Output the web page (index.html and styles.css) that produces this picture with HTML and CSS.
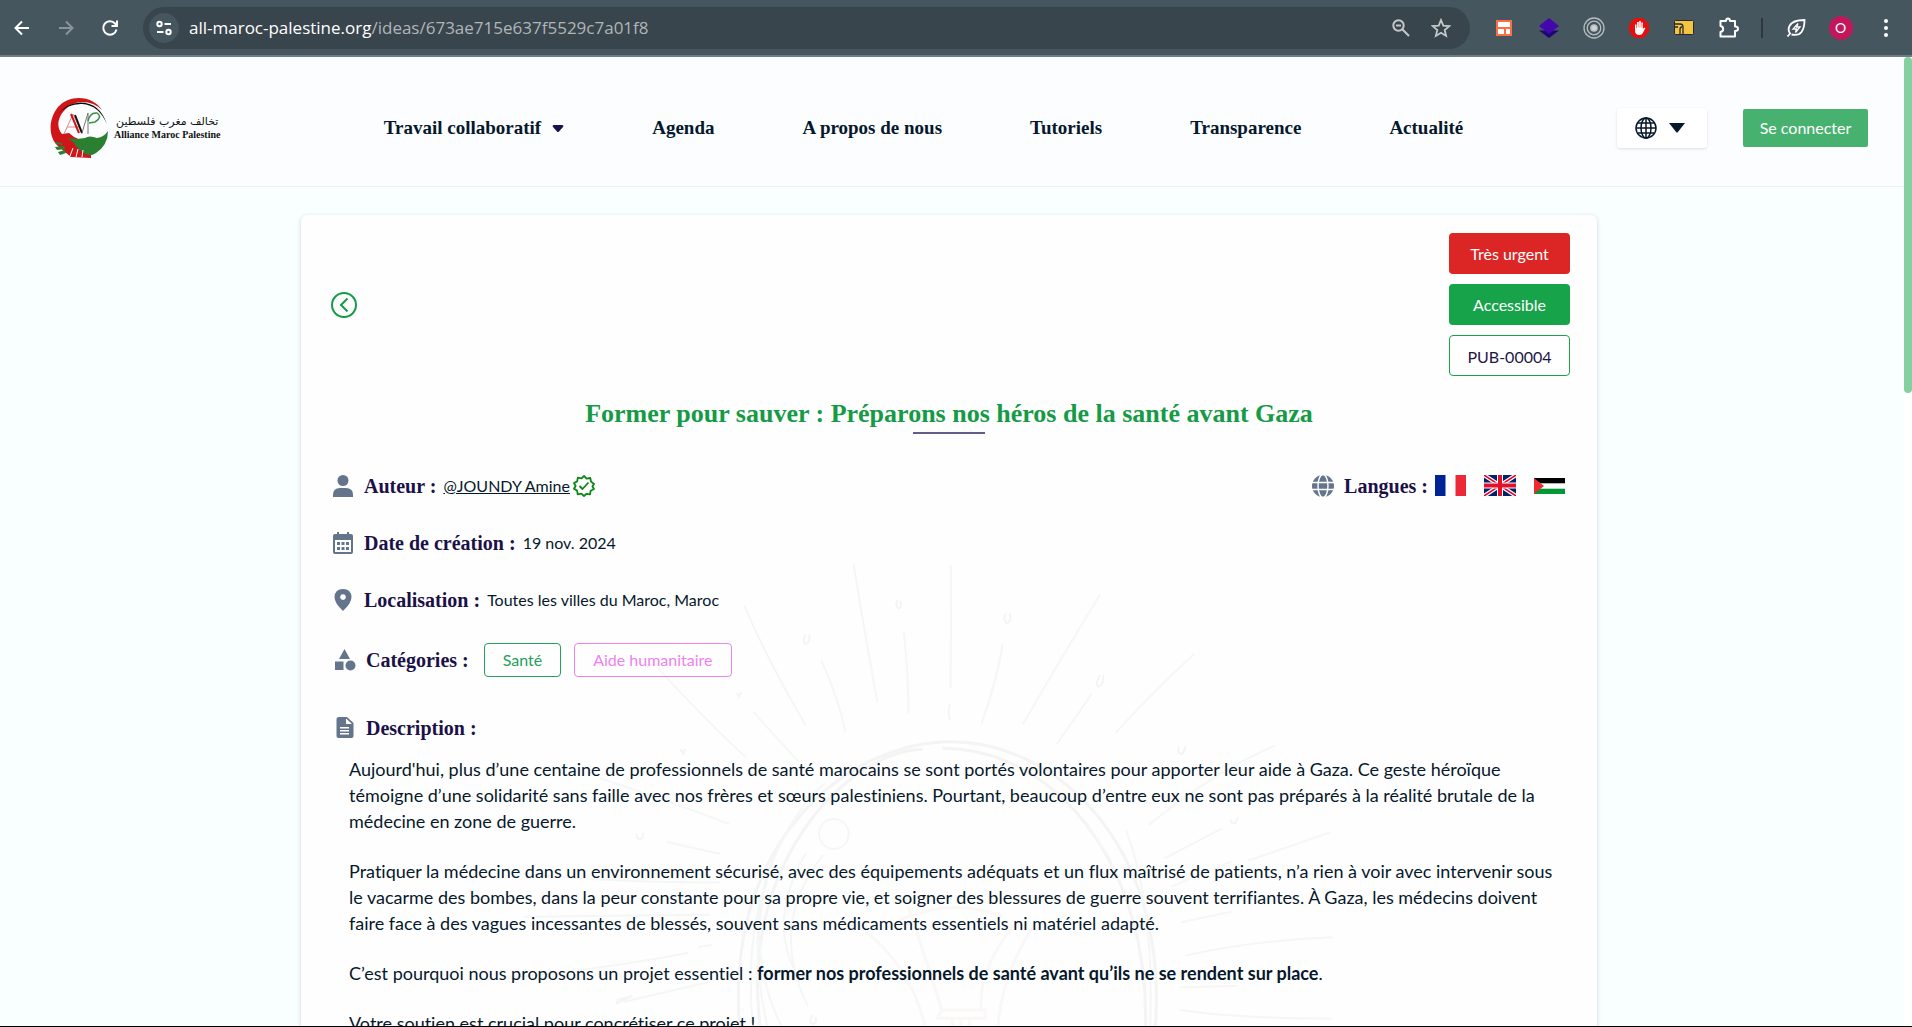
FILE: index.html
```html
<!DOCTYPE html>
<html lang="fr">
<head>
<meta charset="utf-8">
<title>Alliance Maroc Palestine</title>
<link rel="stylesheet" href="styles.css">
</head>
<body>
<div class="toolbar">
  <button class="tool nav-tool" aria-label="Retour"><svg width="20" height="20" viewBox="0 0 20 20" fill="none" stroke="#fff" stroke-width="2"><path d="M17 10H4M10 3.500L3.500 10l6.500 6.500"/></svg></button>
  <button class="tool nav-tool" aria-label="Avancer"><svg width="20" height="20" viewBox="0 0 20 20" fill="none" stroke="#8b969c" stroke-width="2"><path d="M3 10h13M10 3.500l6.500 6.500-6.500 6.500"/></svg></button>
  <button class="tool nav-tool" aria-label="Actualiser"><svg width="20" height="20" viewBox="0 0 20 20" fill="none" stroke="#fff" stroke-width="2"><path d="M16.500 11.500A6.700 6.700 0 1 1 15 5.500l1.500 1.700M17 2.500v5.500h-5.500"/></svg></button>
  <div class="address">
    <span class="site"><svg width="18" height="18" viewBox="0 0 18 18" fill="none" stroke="#fff" stroke-width="2"><circle cx="4.500" cy="5" r="2.200"/><path d="M9.500 5H16M2 13h6.500"/><circle cx="13.500" cy="13" r="2.200"/></svg></span>
    <span class="url">all-maroc-palestine.org<span class="path">/ideas/673ae715e637f5529c7a01f8</span></span>
    <button class="in-tool" aria-label="Zoom"><svg width="20" height="20" viewBox="0 0 20 20" fill="none" stroke="#c3c8ca" stroke-width="2"><circle cx="7.500" cy="7.500" r="5.200"/><path d="M5 7.500h5M11.500 11.500l6.500 6.500"/></svg></button>
    <button class="in-tool" aria-label="Favori"><svg width="20" height="20" viewBox="0 0 20 20" fill="none" stroke="#c3c8ca" stroke-width="1.800"><path d="M10 2l2.300 5.600 6 .5-4.600 3.900 1.400 5.900-5.100-3.200-5.100 3.200 1.400-5.900L1.700 8.100l6-.5z"/></svg></button>
  </div>
  <button class="tool" aria-label="Extension 1"><svg width="16" height="16" viewBox="0 0 16 16"><path fill="#fa7042" d="M0 0h16v16H0z"/><path fill="#fff" d="M2 2h12v5H2zM2 9h6v5H2zM10 9h4v5h-4z"/></svg></button>
  <button class="tool" aria-label="Extension 2"><svg width="22" height="22" viewBox="0 0 22 22"><path fill="#1f0675" d="M1 13.500h20L11 21z"/><path fill="#4407ad" d="M11 1l10 8-10 8-10-8z"/></svg></button>
  <button class="tool" aria-label="Extension 3"><svg width="22" height="22" viewBox="0 0 22 22" fill="none" stroke="#b7bcc0" stroke-width="1.300"><circle cx="11" cy="11" r="10"/><circle cx="11" cy="11" r="6.800"/><circle cx="11" cy="11" r="3.200" fill="#d0d2d4"/></svg></button>
  <button class="tool" aria-label="Extension 4"><svg width="20" height="20" viewBox="0 0 20 20"><path fill="#e50f0f" d="M6 0h8l6 6v8l-6 6H6l-6-6V6z"/><path fill="#fff" d="M6 6.500h1.500V10h.6V4h1.600v5.500h.5V3h1.600v6.500h.5V4.500h1.500V11l1.400-1.500 1.100.8-2.600 5Q13 17 10.500 17 6 17 6 12.500z"/></svg></button>
  <button class="tool" aria-label="Extension 5"><svg width="20" height="15" viewBox="0 0 20 15"><rect x=".5" y=".5" width="19" height="14" rx="1" fill="#f5c242" stroke="#222b30"/><path d="M1 4h5q3 0 3 3v7M6 14V9.500Q6 7 8 7M1 7h3" fill="none" stroke="#222b30" stroke-width="1.300"/></svg></button>
  <button class="tool" aria-label="Extensions"><svg width="22" height="22" viewBox="0 0 22 22" fill="none" stroke="#fff" stroke-width="2" stroke-linejoin="round"><path d="M2.500 4h5.500q0-2.500 2-2.500T12 4h5v5.500q3 0 3 2.200T17 14v5.500H2.500V15q2.700-.5 2.700-3T2.500 9z"/></svg></button>
  <span class="divider"></span>
  <button class="tool" aria-label="Performances"><svg width="20" height="20" viewBox="0 0 20 20" fill="none" stroke="#fff" stroke-width="1.800"><path d="M1.500 18.500l2.600-3Q1.500 12 3.500 8 6.500 2 18.500 2 18.500 10 15.500 14T5.500 16.500"/><path stroke-width="1.300" d="M12 5.500L7 11h3.500l-1 3.500 4.500-5.500h-3.300z"/></svg></button>
  <button class="tool" aria-label="Profil"><span class="avatar">O</span></button>
  <button class="tool" aria-label="Menu"><svg width="6" height="20" viewBox="0 0 6 20" fill="#fff"><circle cx="3" cy="3" r="2"/><circle cx="3" cy="10" r="2"/><circle cx="3" cy="17" r="2"/></svg></button>
</div>

<div class="viewport">
  <div class="page">
    <header class="header">
      <a class="logo" href="#">
        <svg width="60" height="62" viewBox="0 0 60 62" fill="none">
          <path fill="#cf1518" d="M52 13C44-1 20-4 8 10-3 24-1 42 9 50l12 10 20 1 0-5-8-12-9-4-5-4-7 1C6 30 7 19 18 10 28 2 43 4 52 13z"/>
          <path d="M8 17Q17 6 30 5.500q20 0 27 22Q49 8 32 7 18 6.500 8 17z" fill="#0a0a0a"/>
          <path fill="#2a7f31" d="M58 34q0 14-12 22-6 4-10 1-8-4-13-12l-5-4 9 1 8-1q4-3 12 0 7-1 11-7zM5 45l7 1 1 2-7-1zM5 50l9-1 1 3-8 1zM8 55l7-2 1 3-6 2z"/>
          <path d="M20 59l3-8M26 60l2-8M32 60l1-7" stroke="#fff"/>
          <path d="M14 37l9-20 9 20M17 30h12" stroke="#d98b8b"/>
          <path d="M21 17l8 19" stroke="#cf1518" stroke-width="2"/><path d="M25 18l7 18" stroke="#111" stroke-width="2"/>
          <path d="M32 36l6-20v21" stroke="#777"/><path d="M38 24q2-9 9-8 6 4-2 9l-6 1" stroke="#3b9142" stroke-width="1.500"/>
        </svg>
        <span class="brand"><span class="brand-ar" lang="ar" dir="rtl">تخالف مغرب فلسطين</span><span class="brand-fr">Alliance Maroc Palestine</span></span>
      </a>
      <nav class="nav">
        <a href="#">Travail collaboratif <svg width="12" height="9" viewBox="0 0 12 9"><path fill="#1e0f4f" d="M2 1h8q2 0 1 2L7 7.500q-1 1-2 0L1 3q-1-2 1-2z"/></svg></a>
        <a href="#">Agenda</a>
        <a href="#">A propos de nous</a>
        <a href="#">Tutoriels</a>
        <a href="#">Transparence</a>
        <a href="#">Actualité</a>
      </nav>
      <div class="actions">
        <button class="lang" aria-label="Langue">
          <svg width="22" height="22" viewBox="0 0 22 22" fill="none" stroke="#06182b" stroke-width="1.500"><circle cx="11" cy="11" r="10"/><ellipse cx="11" cy="11" rx="5" ry="10"/><path d="M11 1v20M1 11h20M3 6h16M3 16h16"/></svg>
          <svg width="16" height="10" viewBox="0 0 16 10"><path fill="#06182b" d="M0 0h16L8.500 9.500h-1z"/></svg>
        </button>
        <button class="login">Se connecter</button>
      </div>
    </header>

    <main class="main">
      <article class="card">
        <svg class="bulb" viewBox="0 0 1568 1461" preserveAspectRatio="none" fill="none">
          <g class="rays"><path d="M530 72Q555 290 580 488M635 275Q645 400 645 520M734 75L733 445M732 490q-6 25 0 50M302 198Q350 360 430 556M463 362Q500 480 513 577M1046 163Q970 340 884 553M842 312Q830 420 798 550M1242 342Q1160 450 1078 578M1028 462L955 612M120 382Q220 540 305 652M320 515L415 665M1411 617Q1290 690 1147 855M1301 865L1180 955M1527 877L1355 962M1320 965l-125 75M1320 1115l-105 32M1532 1192Q1370 1200 1223 1247M1213 1342l118-4M1212 1410Q1330 1435 1530 1436M0 715Q120 770 270 852M140 906l112 36M-180 1000Q40 1030 250 1027M-160 1130l390-6M-240 1320Q0 1290 185 1238M50 1385l180-60M205 1222l30-8"/></g>
          <g class="curls"><path d="M622 180q-6 20 3 25 7-6 3-22M848 220q-6 25 3 30 10-6 6-30M430 284q-8 22 0 28 10-6 8-30M1046 405q-12 25-4 35 12-8 10-35M286 458l5 12 4-14M168 628l6 12 4-14M1210 622q-4 18 5 20 8-6 8-24M76 880q0 18 8 18 8-4 6-20M1318 838q2 14 10 12l6-18M35 1390l32-22-30 12zM445 1425q-10 20 0 28 10-8 5-22"/></g>
          <g class="glass"><path d="M292 1461C260 900 520 605 734 605s455 300 427 856"/><path d="M335 1461C290 950 530 630 675 628M715 625C960 625 1150 990 1140 1461"/></g>
          <g class="rays"><path d="M320 1461C290 1040 410 800 470 730M1100 870Q1160 1100 1150 1461M405 845Q290 1070 350 1461M375 910Q290 1200 380 1461M467 945Q350 1150 435 1400M1015 845L1068 960M430 940Q350 1140 410 1300"/><ellipse cx="489" cy="882" rx="31" ry="45"/></g>
          <g class="filament"><path d="M555 1175Q650 1280 680 1461M645 1100L715 1410M875 1140Q790 1280 797 1410M910 1150Q840 1300 832 1461M625 1140Q740 1070 840 1130"/><path d="M715 1410h90v25h-100zM737 1435v26M755 1435v26M773 1435v26"/></g>
        </svg>
        <div class="card-head">
          <button class="back" aria-label="Retour"><svg width="26" height="26" viewBox="0 0 26 26" fill="none" stroke="#159a45" stroke-width="2"><circle cx="13" cy="13" r="12"/><path d="M16.500 6.500L10 13l6.500 6.500"/></svg></button>
          <div class="badges">
            <span class="badge red">Très urgent</span>
            <span class="badge green">Accessible</span>
            <span class="badge outline">PUB-00004</span>
          </div>
        </div>
        <h1 class="title">Former pour sauver : Préparons nos héros de la santé avant Gaza</h1>
        <div class="rows">
          <div class="row spread">
            <div class="field">
              <svg class="icon" viewBox="0 0 22 22" fill="#64748b"><circle cx="11" cy="5.500" r="5.500"/><path d="M1 22v-2q0-7 7-7h6q7 0 7 7v2z"/></svg>
              <h2 class="label">Auteur :</h2>
              <a class="author" href="#">@JOUNDY Amine</a>
              <svg class="verified" width="22" height="22" viewBox="0 0 22 22" fill="none" stroke="#0c8717" stroke-width="1.800" stroke-linejoin="round"><path d="M11 1l2.600 2.600 3.700-.6.700 3.600L21 9l-1.600 2.500L21 14l-3.300 1.700-.7 3.700-3.700-.5L11 21l-2.600-2.300-3.700.6-.6-3.700L1 13.800 2.600 11 1 8l3.200-1.600.6-3.700 3.700.6z"/><path d="M6.500 11l3 3 6-6.500"/></svg>
            </div>
            <div class="field">
              <svg class="icon" viewBox="0 0 22 22"><circle cx="11" cy="11" r="11" fill="#64748b"/><g fill="none" stroke="#fff" stroke-width="1.400"><ellipse cx="11" cy="11" rx="5" ry="11.500"/><path d="M0 7.500h22M0 14.500h22"/></g></svg>
              <h2 class="label">Langues :</h2>
              <div class="flags">
                <svg width="31" height="21" viewBox="0 0 31 21" role="img" aria-label="Français"><path fill="#fff" d="M0 0h31v21H0z"/><path fill="#002395" d="M0 0h10.500v21H0z"/><path fill="#ed2939" d="M20.500 0H31v21H20.500z"/></svg>
                <svg width="32" height="21" viewBox="0 0 32 21" role="img" aria-label="English"><path fill="#012169" d="M0 0h32v21H0z"/><path stroke="#fff" stroke-width="4" d="M0 0l32 21M32 0L0 21"/><path stroke="#e4002b" stroke-width="1.500" d="M0 0l32 21M32 0L0 21"/><path stroke="#fff" stroke-width="6" d="M16 0v21M0 10.500h32"/><path stroke="#e4102b" stroke-width="4" d="M16 0v21M0 10.500h32"/></svg>
                <svg width="31" height="16" viewBox="0 0 31 16" role="img" aria-label="العربية"><path fill="#fff" d="M0 0h31v16H0z"/><path d="M0 0h31v5.300H0z"/><path fill="#009736" d="M0 10.700h31V16H0z"/><path fill="#ee2a35" d="M0 0l10 8-10 8z"/></svg>
              </div>
            </div>
          </div>
          <div class="row field">
            <svg class="icon" viewBox="0 0 22 22"><path fill="#64748b" fill-rule="evenodd" d="M5 0h2v2h8V0h2v2h2q2 0 2 2v16q0 2-2 2H3q-2 0-2-2V4q0-2 2-2h2zM3 8v12h16V8z"/><path fill="#64748b" d="M5 10h3v3H5zM9.500 10h3v3h-3zM14 10h3v3h-3zM5 15h3v3H5zM9.500 15h3v3h-3zM14 15h3v3h-3z"/></svg>
            <h2 class="label">Date de création :</h2>
            <span class="value">19 nov. 2024</span>
          </div>
          <div class="row field">
            <svg class="icon" viewBox="0 0 22 22"><path fill="#64748b" fill-rule="evenodd" d="M11 0q8 0 8.500 8 0 6-8.500 14Q2.500 14 2.500 8 3 0 11 0zM11 5.200a2.900 2.900 0 1 0 .01 0z"/></svg>
            <h2 class="label">Localisation :</h2>
            <span class="value">Toutes les villes du Maroc, Maroc</span>
          </div>
          <div class="row field inset categories">
            <svg class="icon" viewBox="0 0 22 22" fill="#64748b"><path d="M10.500 0l5.500 10H5zM1 12.500h8.500V21H1z"/><circle cx="16.500" cy="16.500" r="5"/></svg>
            <h2 class="label">Catégories :</h2>
            <span class="chip sante">Santé</span>
            <span class="chip aide">Aide humanitaire</span>
          </div>
          <div class="field inset section">
            <svg class="icon" viewBox="0 0 22 22"><path fill="#64748b" d="M5 0h8l6.500 6v13q0 2-2 2H4.500q-2 0-2-2V2q0-2 2.500-2z"/><path fill="#fff" d="M12 1.500V7h6zM6 10h9v1.500H6zM6 13h9v1.500H6zM6 16h9v1.500H6z"/></svg>
            <h2 class="label">Description :</h2>
          </div>
        </div>
        <div class="description">
          <p>Aujourd'hui, plus d’une centaine de professionnels de santé marocains se sont portés volontaires pour apporter leur aide à Gaza. Ce geste héroïque témoigne d’une solidarité sans faille avec nos frères et sœurs palestiniens. Pourtant, beaucoup d’entre eux ne sont pas préparés à la réalité brutale de la médecine en zone de guerre.</p>
          <p>Pratiquer la médecine dans un environnement sécurisé, avec des équipements adéquats et un flux maîtrisé de patients, n’a rien à voir avec intervenir sous le vacarme des bombes, dans la peur constante pour sa propre vie, et soigner des blessures de guerre souvent terrifiantes. À Gaza, les médecins doivent faire face à des vagues incessantes de blessés, souvent sans médicaments essentiels ni matériel adapté.</p>
          <p>C’est pourquoi nous proposons un projet essentiel : <strong>former nos professionnels de santé avant qu’ils ne se rendent sur place</strong>.</p>
          <p>Votre soutien est crucial pour concrétiser ce projet !</p>
        </div>
      </article>
    </main>
  </div>
  <div class="scrollbar"><div class="thumb"></div></div>
</div>
</body>
</html>
```
FILE: styles.css
```css
* { box-sizing: border-box; margin: 0; }

body {
  height: 100vh;
  display: flex;
  flex-direction: column;
  overflow: hidden;
  border-bottom: 1px solid #000;
  background: #f9ffff;
  color: #06182b;
  font: 16px/24px Lato, sans-serif;
}

button { padding: 0; border: 0; background: none; font: inherit; color: inherit; }
a { color: inherit; text-decoration: none; }
svg { display: block; flex: none; }

/* Browser toolbar */
.toolbar {
  flex: none;
  display: flex;
  align-items: center;
  height: 57px;
  padding-right: 4px;
  background: #45565f;
  border-bottom: 2px solid #6f7d86;
}
.tool { width: 45px; display: flex; justify-content: center; flex: none; }
.nav-tool { width: 44px; }
.address {
  flex: 1;
  display: flex;
  align-items: center;
  height: 42px;
  margin: 0 11px;
  padding: 0 9px 0 6px;
  border-radius: 21px;
  background: #39454c;
}
.site {
  display: flex;
  align-items: center;
  justify-content: center;
  width: 30px;
  height: 30px;
  border-radius: 50%;
  background: #45565f;
}
.url { flex: 1; margin-left: 10px; color: #fff; font: 17px/24px "Open Sans", sans-serif; }
.path { color: #b0b5b8; }
.in-tool { width: 40px; display: flex; justify-content: center; }
.divider { width: 2px; height: 20px; margin: 0 10px; background: #2e393f; }
.avatar {
  width: 24px;
  height: 24px;
  border-radius: 50%;
  background: #c2185b;
  color: #fff;
  font-size: 14px;
  text-align: center;
}

/* Page area */
.viewport { flex: 1; min-height: 0; display: flex; }
.page { flex: 1; min-width: 0; overflow: hidden; }
.scrollbar { width: 8px; background: #fff; }
.thumb { height: 336px; border-radius: 4px; background: #86cfa2; }

.header {
  display: flex;
  align-items: center;
  justify-content: space-between;
  height: 130px;
  padding: 13px 36px 0 50px;
  background: #fbfdff;
  border-bottom: 1px solid #eef0f2;
}
.logo { display: flex; align-items: center; width: 180px; gap: 4px; }
.brand { display: flex; flex-direction: column; color: #111; text-align: center; white-space: nowrap; }
.brand-ar { font: 11px/14px "DejaVu Sans", sans-serif; }
.brand-fr { font: bold 10px/12px "Liberation Serif", serif; }
.nav { display: flex; gap: 88px; font: bold 19px/24px "Liberation Serif", serif; white-space: nowrap; }
.nav a { display: flex; align-items: center; gap: 11px; }
.actions { display: flex; align-items: center; gap: 36px; }
.lang {
  display: flex;
  align-items: center;
  gap: 12px;
  height: 40px;
  padding: 0 22px 0 18px;
  border-radius: 3px;
  background: #fff;
  box-shadow: 0 1px 3px rgba(0, 0, 0, .12);
}
.login {
  height: 38px;
  width: 125px;
  border-radius: 2px;
  background: #47b26f;
  color: #fff;
}

/* Idea card */
.main { display: flex; justify-content: center; padding: 28px 6px 0 0; }
.card {
  position: relative;
  width: 1296px;
  max-width: 100%;
  padding: 18px 27px 24px 30px;
  border-radius: 6px;
  background: #fefefe;
  box-shadow: 0 1px 4px rgba(15, 23, 42, .18);
}
.card > * { position: relative; }
.card .bulb {
  position: absolute;
  left: 299px;
  top: 325px;
  width: 750px;
  height: 487px;
  overflow: visible;
}
.bulb path, .bulb ellipse { vector-effect: non-scaling-stroke; }
.rays { stroke: #f5f6f6; stroke-width: 2; }
.curls { stroke: #f3f4f4; stroke-width: 2; }
.glass { stroke: #f4f4f5; stroke-width: 3; }
.filament { stroke: #faf8f6; stroke-width: 3; }

.card-head { display: flex; align-items: center; justify-content: space-between; }
.badges { display: flex; flex-direction: column; gap: 10px; }
.badge {
  width: 121px;
  height: 41px;
  border-radius: 4px;
  line-height: 41px;
  text-align: center;
}
.red { background: #dc2626; color: #fff; }
.green { background: #16a34a; color: #fff; }
.outline { border: 1px solid #16a34a; background: #fff; color: #1e1548; }

.title {
  display: flex;
  flex-direction: column;
  align-items: center;
  margin: 20px 0 0 -3px;
  color: #159a45;
  font: bold 26px/36px "Liberation Serif", serif;
}
.title::after { content: ""; width: 72px; height: 2px; background: #615c88; }

.rows { padding: 23px 0 0 1px; }
.row { height: 57px; }
.spread { display: flex; justify-content: space-between; padding-right: 5px; }
.field { display: flex; align-items: center; }
.icon { width: 22px; height: 22px; margin-right: 10px; }
.label { color: #1b1148; font: bold 20px/28px "Liberation Serif", serif; margin-right: 7px; }
.author { text-decoration: underline; margin-right: 3px; }
.flags { display: flex; align-items: center; gap: 18px; }
.inset { padding-left: 2px; }
.categories { height: 64px; }
.section { margin-top: 22px; }
.chip {
  height: 34px;
  margin-left: 8px;
  margin-right: 5px;
  padding: 0 18px;
  border: 1px solid;
  border-radius: 4px;
  line-height: 32px;
}
.sante { color: #24a05a; }
.aide { color: #ee82ee; }

.description {
  display: flex;
  flex-direction: column;
  gap: 24px;
  padding: 14px 8px 0 18px;
  font-size: 18px;
  line-height: 26px;
  font-variant-ligatures: none;
}
```
